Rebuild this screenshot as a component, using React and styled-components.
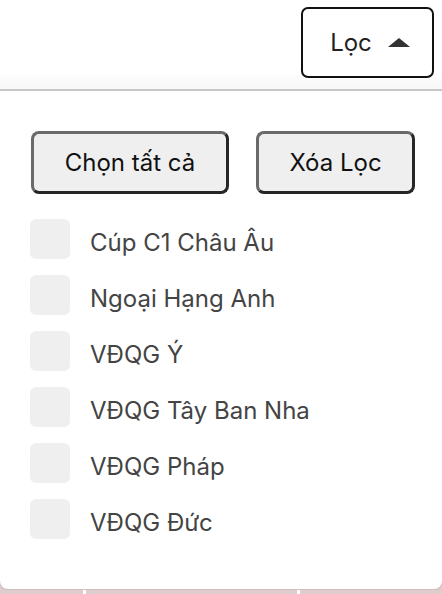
import React, { useState } from "react";
import styled, { createGlobalStyle } from "styled-components";

const GlobalStyle = createGlobalStyle`
  html, body {
    margin: 0;
    padding: 0;
    background: #ffffff;
    font-family: Inter, "Noto Sans", "DejaVu Sans", sans-serif;
  }
`;

const Page = styled.div`
  width: 442px;
  height: 594px;
  overflow: hidden;
  background: #e4d2d2;
`;

const Header = styled.div`
  display: flex;
  justify-content: flex-end;
  align-items: flex-start;
  height: 91px;
  padding: 7px 8px 0 0;
  box-sizing: border-box;
  background: linear-gradient(#ffffff 80%, #f7f7f7);
  border-bottom: 2px solid #c9c9c9;
`;

const FilterToggle = styled.button`
  display: flex;
  align-items: center;
  justify-content: center;
  gap: 15px;
  width: 133px;
  height: 71px;
  padding: 0 0 0 6px;
  background: #ffffff;
  border: 2px solid #111111;
  border-radius: 7px;
  font-family: inherit;
  font-size: 24px;
  color: #222222;
  cursor: pointer;
`;

const Panel = styled.div`
  height: 498px;
  box-sizing: border-box;
  padding: 40px 0 0 31px;
  background: #ffffff;
  border-radius: 0 0 8px 8px;
  box-shadow: 0 2px 4px rgba(0, 0, 0, 0.12);
`;

const Actions = styled.div`
  display: flex;
  gap: 27px;
  margin-bottom: 25px;
`;

const ActionButton = styled.button`
  width: ${({ $width }) => $width}px;
  height: 63px;
  padding: 0;
  background: #efefef;
  border: 3px solid;
  border-color: #6a6a6a #262626 #262626 #6a6a6a;
  border-radius: 8px;
  font-family: inherit;
  font-size: 24px;
  color: #111111;
  cursor: pointer;
`;

const List = styled.div`
  display: flex;
  flex-direction: column;
  gap: 16px;
  margin-left: -1px;
`;

const Row = styled.label`
  display: flex;
  align-items: center;
  gap: 20px;
  height: 40px;
  cursor: pointer;
`;

const Box = styled.span`
  flex: none;
  width: 40px;
  height: 40px;
  border-radius: 6px;
  background: ${({ $checked }) => ($checked ? "#d6d6d6" : "#efefef")};
`;

const Label = styled.span`
  padding-top: 6px;
  font-size: 24px;
  color: #444444;
`;

const Backdrop = styled.div`
  display: flex;
  gap: 3px;
  margin-top: 1px;
  height: 20px;
  background: #ffffff;
`;

const BackdropCell = styled.div`
  width: ${({ $width }) => $width}px;
  background: #e0cccc;
`;

const leagues = [
  "Cúp C1 Châu Âu",
  "Ngoại Hạng Anh",
  "VĐQG Ý",
  "VĐQG Tây Ban Nha",
  "VĐQG Pháp",
  "VĐQG Đức",
];

const App = () => {
  const [open, setOpen] = useState(true);
  const [checked, setChecked] = useState([]);

  const toggle = (name) =>
    setChecked((prev) =>
      prev.includes(name) ? prev.filter((n) => n !== name) : [...prev, name]
    );

  return (
    <Page>
      <GlobalStyle />
      <Header>
        <FilterToggle onClick={() => setOpen(!open)}>
          Lọc
          <svg width="24" height="12" viewBox="0 0 24 12">
            <path d="M12 1 L23 10 L1 10 Z" fill="#333333" />
          </svg>
        </FilterToggle>
      </Header>
      {open && (
        <Panel>
          <Actions>
            <ActionButton $width={198} onClick={() => setChecked(leagues)}>
              Chọn tất cả
            </ActionButton>
            <ActionButton $width={159} onClick={() => setChecked([])}>
              Xóa Lọc
            </ActionButton>
          </Actions>
          <List>
            {leagues.map((name) => (
              <Row key={name} onClick={() => toggle(name)}>
                <Box $checked={checked.includes(name)} />
                <Label>{name}</Label>
              </Row>
            ))}
          </List>
        </Panel>
      )}
      <Backdrop>
        <BackdropCell $width={83} />
        <BackdropCell $width={211} />
        <BackdropCell $width={142} />
      </Backdrop>
    </Page>
  );
};

export default App;
